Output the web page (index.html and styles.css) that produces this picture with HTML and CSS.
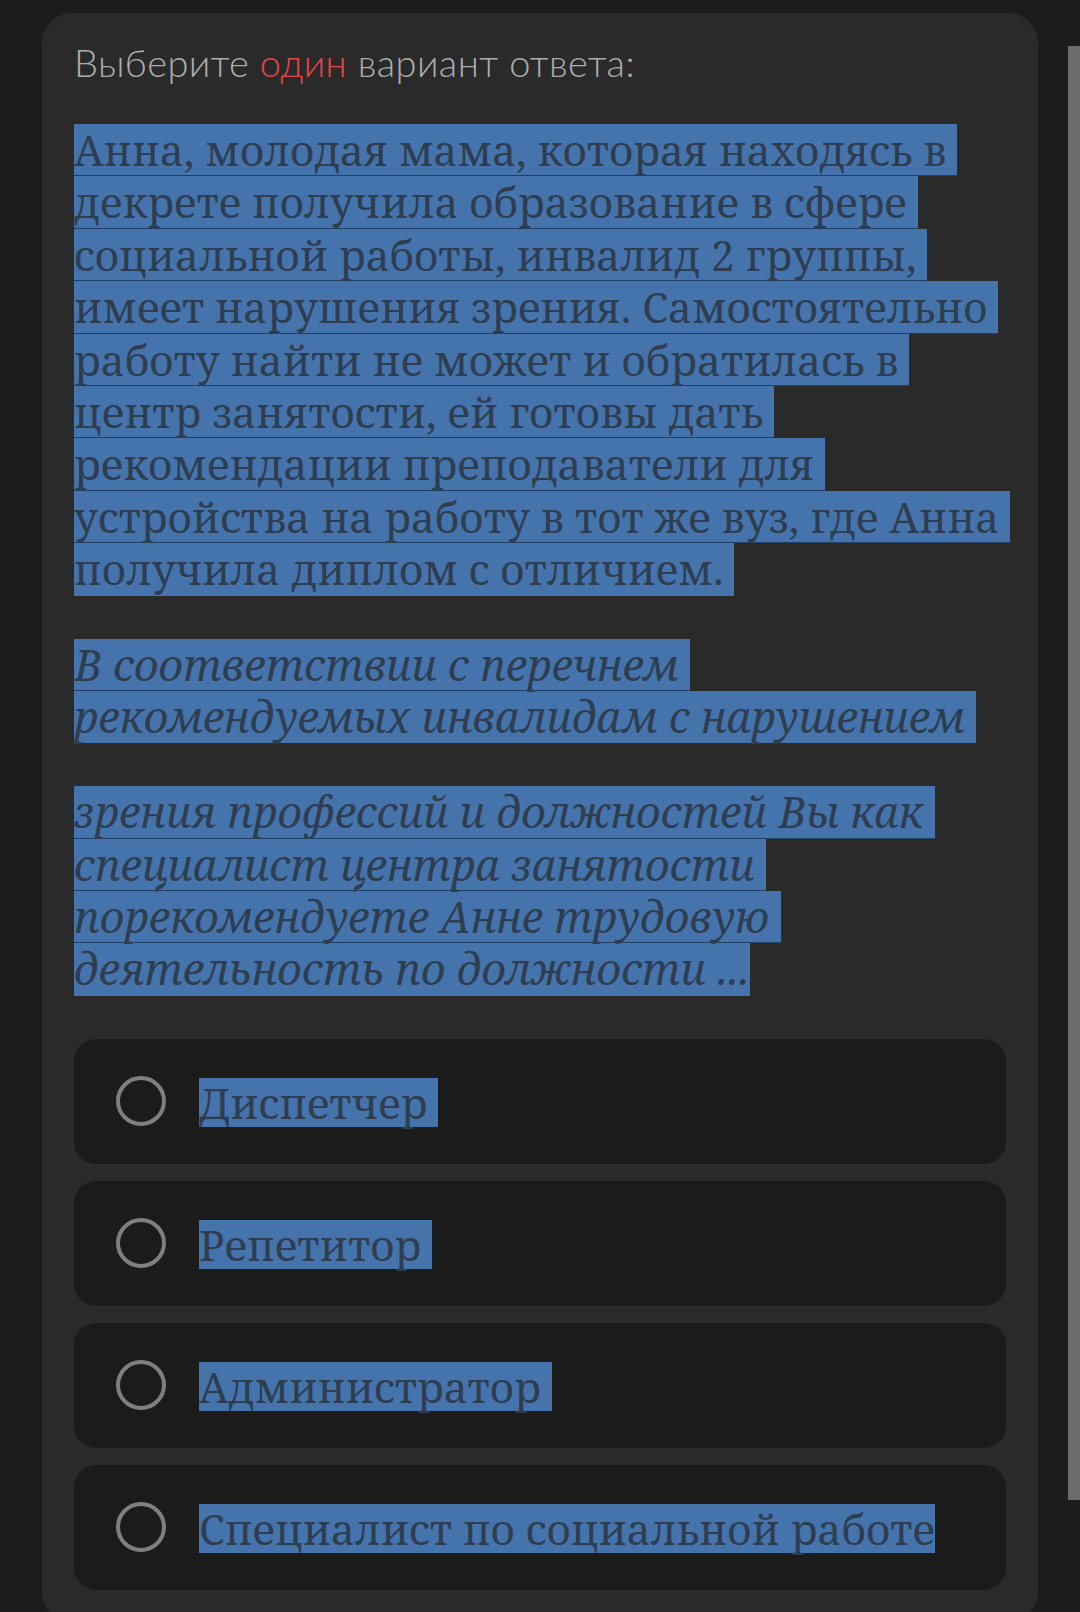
FILE: index.html
```html
<!DOCTYPE html>
<html lang="ru">
<head>
<meta charset="utf-8">
<title>Вопрос</title>
<link rel="stylesheet" href="styles.css">
</head>
<body>
<div class="page">
  <div class="card">
    <div class="prompt">Выберите <span class="accent">один</span> вариант ответа:</div>
    <div class="question">
      <p class="para">
        <span class="ln">Анна, молодая мама, которая находясь в </span>
        <span class="ln">декрете получила образование в сфере </span>
        <span class="ln">социальной работы, инвалид 2 группы, </span>
        <span class="ln">имеет нарушения зрения. Самостоятельно </span>
        <span class="ln">работу найти не может и обратилась в </span>
        <span class="ln">центр занятости, ей готовы дать </span>
        <span class="ln">рекомендации преподаватели для </span>
        <span class="ln">устройства на работу в тот же вуз, где Анна </span>
        <span class="ln last">получила диплом с отличием. </span>
      </p>
      <p class="para italic">
        <span class="ln">В соответствии с перечнем </span>
        <span class="ln last">рекомендуемых инвалидам с нарушением </span>
      </p>
      <p class="para italic">
        <span class="ln">зрения профессий и должностей Вы как </span>
        <span class="ln">специалист центра занятости </span>
        <span class="ln">порекомендуете Анне трудовую </span>
        <span class="ln last">деятельность по должности ...</span>
      </p>
    </div>
    <div class="options">
      <div class="option"><span class="radio"></span><span class="opt-text">Диспетчер </span></div>
      <div class="option"><span class="radio"></span><span class="opt-text">Репетитор </span></div>
      <div class="option"><span class="radio"></span><span class="opt-text">Администратор </span></div>
      <div class="option"><span class="radio"></span><span class="opt-text">Специалист по социальной работе</span></div>
    </div>
  </div>
</div>
<div class="scrollbar"></div>
</body>
</html>
```
FILE: styles.css
```css
html, body {
  margin: 0;
  padding: 0;
  background: #1c1c1c;
  height: 100%;
  overflow: hidden;
}

.page {
  padding: 13px 0 0 42px;
}

.card {
  width: 996px;
  box-sizing: border-box;
  background: #2a2a2a;
  border-radius: 30px;
  padding: 26px 32px 32px 32px;
}

.prompt {
  font-family: "Lato", "Open Sans", sans-serif;
  font-weight: 300;
  font-size: 38px;
  letter-spacing: 0.4px;
  line-height: 46px;
  color: #adadad;
  margin-bottom: 39px;
}

.accent {
  color: #e2464c;
}

.question {
  font-family: "Noto Serif", "DejaVu Serif", "Liberation Serif", serif;
  font-size: 42px;
  color: #2f3d50;
}

.para {
  margin: 0 0 43px 0;
}

.para.italic {
  font-style: italic;
  font-size: 43px;
}

.ln {
  display: block;
  width: fit-content;
  white-space: pre;
  background: #4574ad;
  height: 52.4px;
  line-height: 52px;
  box-sizing: border-box;
  border-bottom: 1px solid #1f3f66;
}

.ln.last {
  border-bottom: none;
}

.options {
  display: flex;
  flex-direction: column;
  gap: 17px;
}

.option {
  height: 125px;
  background: #1b1b1b;
  border-radius: 22px;
  display: flex;
  align-items: center;
  padding-left: 42px;
  gap: 33px;
}

.radio {
  width: 50px;
  height: 50px;
  box-sizing: border-box;
  border: 4px solid #7f7f7f;
  border-radius: 50%;
  flex: none;
}

.opt-text {
  font-family: "Noto Serif", "DejaVu Serif", "Liberation Serif", serif;
  font-size: 42px;
  line-height: 49px;
  height: 49px;
  color: #2f3d50;
  background: #4574ad;
  white-space: pre;
  margin-top: 2px;
}

.scrollbar {
  position: fixed;
  top: 46px;
  right: 0;
  width: 12px;
  height: 1454px;
  background: #6b6a6d;
}
```
